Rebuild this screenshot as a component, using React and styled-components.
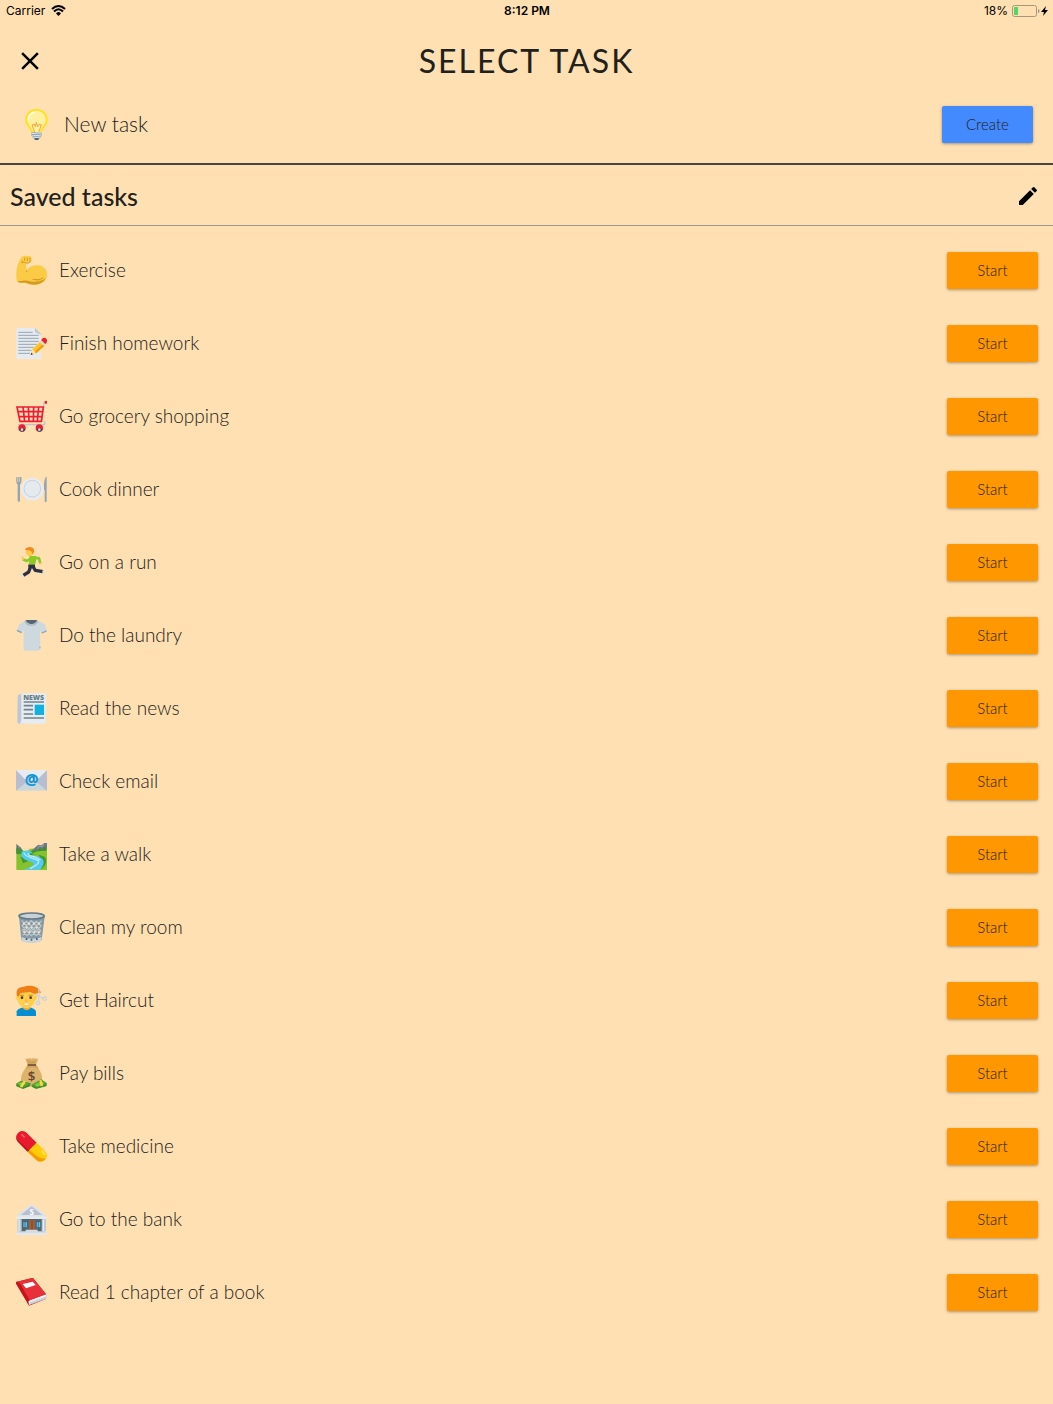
import React from "react";
import styled, { createGlobalStyle } from "styled-components";

const GlobalStyle = createGlobalStyle`
  *, *::before, *::after { box-sizing: border-box; }
  body {
    margin: 0;
    background: #ffe0b2;
    color: #22201a;
    font-family: Lato, "Open Sans", sans-serif;
    font-weight: 300;
  }
  button { font: inherit; color: inherit; border: 0; cursor: pointer; }
`;

const Screen = styled.div`
  min-height: 100vh;
  display: flex;
  flex-direction: column;
`;

const StatusBar = styled.div`
  display: grid;
  grid-template-columns: 1fr auto 1fr;
  align-items: center;
  height: 21px;
  padding: 0 5px 0 6px;
  font-family: Inter, Roboto, sans-serif;
  font-size: 12px;
  font-weight: 400;
  color: #000;
`;

const StatusGroup = styled.div`
  display: flex;
  align-items: center;
  justify-content: ${(p) => (p.$end ? "flex-end" : "flex-start")};
  gap: ${(p) => (p.$end ? 4 : 6)}px;
`;

const Clock = styled.time`
  font-weight: 600;
`;

const Header = styled.header`
  display: grid;
  grid-template-columns: 1fr auto 1fr;
  align-items: center;
  height: 80px;
  padding: 0 15px;
`;

const Title = styled.h1`
  margin: 0;
  font-size: 32px;
  line-height: 40px;
  font-weight: 400;
  letter-spacing: 2px;
`;

const IconButton = styled.button`
  display: flex;
  justify-self: start;
  padding: 0;
  background: none;
  color: #000;
`;

const NewTask = styled.section`
  display: flex;
  align-items: center;
  gap: 12px;
  height: 47px;
  margin-bottom: 15px;
  padding: 0 20px 0 21px;
`;

const SavedHeader = styled.div`
  display: flex;
  align-items: center;
  justify-content: space-between;
  height: 63px;
  padding: 1px 13px 0 10px;
  border-top: 2px solid #4a4444;
  border-bottom: 1px solid #9c9691;
`;

const SavedTitle = styled.h2`
  margin: 0;
  font-size: 25px;
  line-height: 32px;
  font-weight: 500;
`;

const TaskList = styled.ul`
  list-style: none;
  margin: 0;
  padding: 8px 0;
`;

const TaskRow = styled.li`
  display: flex;
  align-items: center;
  gap: 12px;
  height: 73px;
  padding: 0 15px 0 16px;
`;

const TaskName = styled.span`
  flex: 1;
  padding-bottom: 1px;
  font-size: ${(p) => (p.$large ? 21 : 19)}px;
  line-height: 24px;
`;

const ActionButton = styled.button`
  && {
    width: 91px;
    height: 37px;
    padding: 0 0 2px;
    border-radius: 2px;
    background: ${(p) => (p.$primary ? "#448aff" : "#ff9800")};
    box-shadow: 0 1px 3px rgba(0, 0, 0, 0.35);
    font-size: 15px;
  }
`;

const Emoji = styled.svg`
  width: 31px;
  height: 31px;
  flex: none;
  overflow: visible;
`;

const art = {
  bulb: (
    <>
      <path d="M46 0C26 0 13 14 13 33c0 18 16 23 18 40h31c2-17 18-22 18-40C80 14 67 0 46 0z" fill="#ffe11f" />
      <path d="M46 5C30 5 19 17 19 33c0 15 14 20 17 37h21c3-17 17-22 17-37C74 17 63 5 46 5z" fill="#fff0a0" />
      <path d="M22 30c1-11 8-18 17-20" fill="none" stroke="#fff" strokeWidth="4" strokeLinecap="round" />
      <path d="M41 70L33 48l6-3 4 8 3-13 4 13 5-8 6 3-8 22" fill="none" stroke="#eea63a" strokeWidth="3" />
      <path d="M31 70h31v9l-5 8-6 6h-9l-6-6-5-8z" fill="#94a5b1" />
      <path d="M31 74l31-3M32 81l29-3M36 87l21-3" stroke="#dfe7eb" strokeWidth="3" />
      <path d="M40 88h14l-3 5h-8z" fill="#455763" />
    </>
  ),
  arm: (
    <>
      <path d="M17 5c7-4 18-3 25-1 5 1 5 6 4 11-1 6-5 9-12 9l-3-1c-2 9 0 17 3 23C39 35 52 30 65 31c17 1 28 12 28 28 0 18-15 29-36 30-11 0-19-2-28-6-9 1-17 2-26-3C-1 59-1 32 17 5z" fill="#fbcb45" />
      <path d="M6 78c12 1 20-3 29-1 18 6 40 3 54-7-6 12-20 19-34 19-10 0-18-3-26-6-9 1-16 1-23-2zM53 71c12 3 24 0 31-6-7 12-22 14-37 8z" fill="#d79b22" />
      <path d="M20 17l-3 6c5 0 8-2 11 0 6 3 15 1 17-6M26 8v9M34 8v10M42 8v9M34 46l-4 5" fill="none" stroke="#d79b22" strokeWidth="3" />
    </>
  ),
  memo: (
    <>
      <path d="M1 0h56l18 18v75H1z" fill="#e6ebf0" />
      <path d="M57 0l18 18v2L57 12z" fill="#bac5cd" />
      <path d="M7 13h43M7 22h61M7 31h61M7 40h61M7 49h55M7 58h46M7 67h39M7 76h35" stroke="#94a5b0" strokeWidth="3" />
      <path d="M44 81l5-17 26-26 13 12-27 26z" fill="#ffc329" />
      <path d="M54 74l29-28 5 4-27 26z" fill="#f39a00" />
      <path d="M44 81l5-17 12 12z" fill="#ffe1ad" />
      <path d="M44 81l2-7 5 5z" fill="#333" />
      <path d="M71 42l13 12 4-4-13-12z" fill="#d8dee2" />
      <path d="M76 37c2-10 15-11 17 0 0 5-1 8-5 11z" fill="#ed1c2e" />
    </>
  ),
  cart: (
    <>
      <path d="M89 4l-5 2-7 57M6 71h77c5 0 5-9 0-9" fill="none" stroke="#b9c3cd" strokeWidth="4" />
      <path d="M3 18h79l-6 43H12z" fill="#ffe0c0" />
      <path d="M3 18h79l-6 43H12zM6 32h73M9 47h69M21 18l5 43M37 18l2 43M53 18l-1 43M68 18l-4 43" fill="none" stroke="#ed1c2e" strokeWidth="5" />
      <path d="M86 0h7v8h-7z" fill="#ed1c2e" />
      <circle cx="18" cy="81" r="11" fill="#ed1c2e" />
      <circle cx="70" cy="81" r="11" fill="#ed1c2e" />
      <path d="M9 83h19c0 12-17 12-19 0zM61 83h19c0 12-17 12-19 0z" fill="#3c4650" />
      <circle cx="18" cy="86" r="4" fill="#cdd5da" />
      <circle cx="70" cy="86" r="4" fill="#cdd5da" />
    </>
  ),
  plate: (
    <>
      <path d="M1 9c-1 12-1 18 4 23v47c0 6 7 6 7 0V32c5-5 5-12 4-23z" fill="#93a5b0" />
      <path d="M5 8v16M10 8v16" stroke="#ffe0b2" strokeWidth="2" />
      <path d="M92 7c-8 6-8 25-8 38v3h2v33c0 4 6 4 6 0z" fill="#93a5b0" />
      <circle cx="49" cy="46" r="34" fill="#e7ecf0" />
      <circle cx="49" cy="44" r="25" fill="#e5eaee" stroke="#c8d1d8" strokeWidth="3" />
    </>
  ),
  runner: (
    <>
      <path d="M53 31l16 3 4 15" fill="none" stroke="#8cc926" strokeWidth="8" strokeLinejoin="round" />
      <path d="M46 33L33 42l-13-5" fill="none" stroke="#8cc926" strokeWidth="8" strokeLinejoin="round" />
      <path d="M40 27h18l4 8-6 22H37l3-16z" fill="#8cc926" />
      <path d="M15 29l6-1 4 9-5 3zM70 48l6-2 1 5-5 3z" fill="#ffc94d" />
      <path d="M29 11c2-13 25-12 25 0 0 9-4 16-11 17-8 0-14-7-14-17z" fill="#ffc94d" />
      <path d="M27 8C31-3 53-3 54 9c0 5-1 9-4 13l-5-11z" fill="#f18a18" />
      <path d="M50 57l8 13 23 4" fill="none" stroke="#2d2f43" strokeWidth="10" strokeLinejoin="round" />
      <path d="M45 56L38 75 22 85" fill="none" stroke="#2d2f43" strokeWidth="10" strokeLinejoin="round" />
      <path d="M37 53h20v9H37z" fill="#2d2f43" />
      <path d="M13 81l5-1 6 8 1 3-12-6zM81 68l4 13-5 4-1-12z" fill="#d9e1e8" />
    </>
  ),
  shirt: (
    <>
      <path d="M27 2h38l22 10 6 23-15 5-6-8 1 56-5 4H27l-4-4V31l-7 9-14-7L10 13z" fill="#ced9df" />
      <path d="M29 0h34c-2 16-30 17-34 0z" fill="#536672" />
      <path d="M27 2c6 18 34 18 38 0" fill="none" stroke="#aab8c1" strokeWidth="4" />
      <path d="M3 31l14 7M77 39l15-6" stroke="#8ea1ad" strokeWidth="4" />
      <path d="M69 80h5v5h-5z" fill="#a8b8c1" />
    </>
  ),
  news: (
    <>
      <path d="M5 7l15-7 5 92H8l-4-5z" fill="#bdc7d4" />
      <path d="M16 1h74v85l-4 6H12l4-10z" fill="#e7ecf1" />
      <text x="53" y="20" textAnchor="middle" fontFamily="Open Sans, sans-serif" fontSize="21" fontWeight="800" fill="#647b87">NEWS</text>
      <path d="M23 27h61M23 38h28M23 50h28M23 63h28M23 75h61" stroke="#6d828e" strokeWidth="5" />
      <path d="M56 35h28v31H56z" fill="#11b2df" />
    </>
  ),
  email: (
    <>
      <path d="M0 12h93v62H0z" fill="#ccd7dc" />
      <path d="M0 12l38 31L0 74zM93 12L55 43l38 31z" fill="#b8bed2" />
      <path d="M0 12h93L59 46H33z" fill="#e8ecf1" />
      <text x="47" y="57" textAnchor="middle" fontFamily="Open Sans, sans-serif" fontSize="46" fontWeight="800" fill="#1697d3">@</text>
    </>
  ),
  park: (
    <>
      <path d="M1 29h92v64H1z" fill="#84c32e" />
      <path d="M9 28h36l-12 8H16z" fill="#ffe0b2" />
      <path d="M1 14l8 8 5 3 10 17H1zM45 37l13-12 9-8 9 2 9-7h8v28z" fill="#6b7982" />
      <path d="M66 29l5-9 7 4 6-9M6 29l4-6" fill="none" stroke="#9aa6ad" strokeWidth="3" />
      <path d="M1 32l14-1 9 6h21l16-5 32-4v14L46 48 1 45zM14 54c14-2 20 4 29 9l-22 10zM68 47l18 6c7 9 5 19-1 28l-9 10V68z" fill="#42992f" />
      <path d="M60 38l33-6v12l-28 4-18-3z" fill="#84c32e" />
      <path d="M17 38c12-7 28-2 32 3-14 4-12 8 5 9 17 1 30 9 29 21-1 9-7 15-12 21H21c13-4 31-11 32-18 0-8-35-7-37-27z" fill="#55caef" />
      <path d="M24 41c-1 14 32 16 43 24 5 9-12 17-25 24M35 43l5 7 17 4 16 9" fill="none" stroke="#b6edfb" strokeWidth="4" />
      <path d="M4 20l5 12H1zM85 20l6 15H79zM72 23l6 13H67z" fill="#43863b" />
    </>
  ),
  bin: (
    <>
      <path d="M9 13h77l-9 70c-5 11-54 11-61 0z" fill="#8498a5" />
      <path d="M17 25l14 15 15-14 15 15 16-15M17 42l14-14 15 15 15-15 16 15M18 56l13-14 15 15 15-15 14 15M19 42l13 15 14-14 15 15 13-15M20 70l12-13 14 14 15-14 13 14M20 56l13 15 13-14 15 14 13-14" stroke="#b9c6ce" strokeWidth="4" fill="none" />
      <path d="M24 30l4 5-4 5-4-5zM39 30l4 5-4 5-4-5zM54 30l4 5-4 5-4-5zM69 30l4 5-4 5-4-5zM32 42l4 5-4 5-4-5zM47 42l4 5-4 5-4-5zM62 42l4 5-4 5-4-5zM25 55l4 5-4 5-4-5zM40 55l4 5-4 5-4-5zM55 55l4 5-4 5-4-5zM69 55l4 5-4 5-4-5z" fill="#f3dfc5" />
      <path d="M16 75c17 6 44 6 61 0l-2 12c-10 8-48 8-57 0z" fill="#ccd5da" />
      <path d="M29 78h5v6h-5zM44 80h5v6h-5zM60 78h5v6h-5z" fill="#536570" />
      <ellipse cx="47" cy="12" rx="38" ry="9" fill="#c7d2d8" stroke="#657985" strokeWidth="5" />
    </>
  ),
  haircut: (
    <>
      <path d="M2 93V79c5-9 15-12 29-12s25 4 29 12v14z" fill="#058fd2" />
      <path d="M22 62h20v10c-7 5-14 4-20 0z" fill="#f4ac30" />
      <path d="M3 31c-5 0-2 16 3 16 3 14 13 22 25 22s22-8 25-22c8 0 10-17 3-16l-8-17H12z" fill="#ffcf4b" />
      <path d="M3 32C-2 15 9 5 22 6c17-8 45-5 53 17L55 27 43 21 13 24 8 35z" fill="#ef7f14" />
      <path d="M12 31h12M38 31h12" stroke="#bd6815" strokeWidth="2" />
      <circle cx="18" cy="38" r="4" fill="#4d352d" />
      <circle cx="44" cy="38" r="4" fill="#4d352d" />
      <path d="M31 41l-2 8h5" fill="none" stroke="#eda52c" strokeWidth="2" />
      <path d="M21 55h20c-2 8-17 8-20 0z" fill="#fff" stroke="#e59a24" strokeWidth="1" />
      <path d="M69 8l-1 42M55 27l27 14" stroke="#cbd3d7" strokeWidth="4" />
      <circle cx="66" cy="54" r="5" fill="none" stroke="#cbd3d7" strokeWidth="4" />
      <circle cx="86" cy="41" r="5" fill="none" stroke="#cbd3d7" strokeWidth="4" />
    </>
  ),
  money: (
    <>
      <path d="M28 2c8 1 13-4 19 0 7-4 13 1 20 0l-7 18c11 15 19 28 19 45 0 27-64 27-64 0 0-17 10-30 20-45z" fill="#dbb36c" />
      <path d="M36 20l24-1 8 14c-15-7-24-7-38 0zM31 4l14 6 18-4-7 12H37z" fill="#cfa35a" />
      <path d="M35 21h25" stroke="#71503b" strokeWidth="5" />
      <text x="47" y="69" textAnchor="middle" fontFamily="Open Sans, sans-serif" fontSize="40" fontWeight="600" fill="#654431">$</text>
      <path d="M0 77l15-9 30 8-3 9-21 8L1 85zM47 80l28-16 18 12-2 9-31 8-13-7z" fill="#4f9e30" />
      <path d="M5 77l13-5 15 5-15 6zM55 80l20-10 11 6-22 10z" fill="#86c941" />
      <path d="M23 68l7 2-12 20-8-3zM70 66l7 1 5 17-8 2z" fill="#ffd83e" />
      <path d="M2 83l18 7 22-8M49 85l13 5 29-9" stroke="#347829" strokeWidth="2" fill="none" />
    </>
  ),
  pill: (
    <>
      <path d="M7 5c9-8 19-5 26 2l29 28-27 27L7 33c-9-9-9-20 0-28z" fill="#e81b2c" />
      <path d="M62 35l25 25c9 9 7 19 0 27-8 7-18 7-27-1L35 62z" fill="#ffcd08" />
      <path d="M2 20c2 6 6 9 10 13l29 26-6 3L6 33c-3-4-5-8-4-13z" fill="#bc1422" />
      <path d="M41 57c14 12 30 29 49 25-9 12-21 12-30 4L35 62z" fill="#f69b00" />
      <ellipse cx="21" cy="14" rx="8" ry="3" fill="#f55a61" transform="rotate(40 21 14)" />
      <ellipse cx="82" cy="65" rx="9" ry="4" fill="#ffe050" transform="rotate(45 82 65)" />
    </>
  ),
  bank: (
    <>
      <path d="M9 42h76v43H9z" fill="#506875" />
      <path d="M47 0l42 32v6H4v-6z" fill="#dce3e9" />
      <path d="M47 7l32 26H14z" fill="#b8c0d0" />
      <text x="47" y="32" textAnchor="middle" fontFamily="Open Sans, sans-serif" fontSize="24" fontWeight="700" fill="#fff">S</text>
      <path d="M1 38h91v7H1z" fill="#e6ebef" />
      <path d="M4 46h13v36H4zM77 46h13v36H77z" fill="#c1cbd4" />
      <path d="M8 46h3v36H8zM81 46h3v36h-3z" fill="#eaf0f3" />
      <path d="M21 53h13v18H21zM61 53h13v18H61z" fill="#5cc9ed" stroke="#3e5360" strokeWidth="2" />
      <path d="M27 53v18M67 53v18" stroke="#3e5360" strokeWidth="2" />
      <path d="M39 52c0-5 18-5 18 0v27H39z" fill="#a65d32" />
      <path d="M48 49v29" stroke="#633b2b" strokeWidth="2" />
      <path d="M29 77h36v5h25v6H4v-6h25z" fill="#d5dde4" />
      <path d="M0 87h93v6H0z" fill="#e3e8ed" />
    </>
  ),
  book: (
    <>
      <path d="M0 15L38 5l13-2 40 50-1 13-51 20L0 20z" fill="#bf161e" />
      <path d="M37 71l55-20-1 14-52 19z" fill="#e9eff2" />
      <path d="M4 14L51 3l39 48-49 19z" fill="#e83038" />
      <path d="M1 15c4-3 9 2 12 7l28 48c-7 3-8 10-2 14z" fill="#c5121b" />
      <path d="M20 21l30-7 9 10-29 10z" fill="#fff" />
      <path d="M42 78l49-18M43 81l47-17" stroke="#aab7bf" strokeWidth="2" />
    </>
  ),
};

const tasks = [
  { icon: "arm", name: "Exercise" },
  { icon: "memo", name: "Finish homework" },
  { icon: "cart", name: "Go grocery shopping" },
  { icon: "plate", name: "Cook dinner" },
  { icon: "runner", name: "Go on a run" },
  { icon: "shirt", name: "Do the laundry" },
  { icon: "news", name: "Read the news" },
  { icon: "email", name: "Check email" },
  { icon: "park", name: "Take a walk" },
  { icon: "bin", name: "Clean my room" },
  { icon: "haircut", name: "Get Haircut" },
  { icon: "money", name: "Pay bills" },
  { icon: "pill", name: "Take medicine" },
  { icon: "bank", name: "Go to the bank" },
  { icon: "book", name: "Read 1 chapter of a book" },
];

function TaskIcon({ name }) {
  return (
    <Emoji viewBox="0 0 93 93" aria-hidden="true">
      {art[name]}
    </Emoji>
  );
}

function WifiIcon() {
  return (
    <svg width="15" height="11" viewBox="0 0 15 11" aria-hidden="true">
      <path d="M1 4c4-4 9-4 13 0M3 6.500c3-3 6-3 9 0" fill="none" stroke="#000" strokeWidth="2" />
      <path d="M5 8.500c2-2 3-2 5 0L7.500 11z" />
    </svg>
  );
}

function BatteryIcon() {
  return (
    <svg width="36" height="12" viewBox="0 0 36 12" aria-hidden="true">
      <rect x="0.500" y="0.500" width="24" height="11" rx="2" fill="none" stroke="#a8977c" />
      <path d="M26 4c2 0 2 4 0 4z" fill="#a8977c" />
      <path d="M2 2h4v8H2z" fill="#4cd964" />
      <path d="M34 1l-5 6h3l-1 4 5-6h-3z" />
    </svg>
  );
}

export default function App() {
  return (
    <Screen>
      <GlobalStyle />
      <StatusBar>
        <StatusGroup>
          <span>Carrier</span>
          <WifiIcon />
        </StatusGroup>
        <Clock>8:12 PM</Clock>
        <StatusGroup $end>
          <span>18%</span>
          <BatteryIcon />
        </StatusGroup>
      </StatusBar>
      <Header>
        <IconButton aria-label="Close">
          <svg width="30" height="30" viewBox="0 0 24 24" fill="currentColor">
            <path d="M19 6.410L17.590 5 12 10.590 6.410 5 5 6.410 10.590 12 5 17.590 6.410 19 12 13.410 17.590 19 19 17.590 13.410 12z" />
          </svg>
        </IconButton>
        <Title>SELECT TASK</Title>
      </Header>
      <main>
        <NewTask>
          <TaskIcon name="bulb" />
          <TaskName $large>New task</TaskName>
          <ActionButton $primary>Create</ActionButton>
        </NewTask>
        <SavedHeader>
          <SavedTitle>Saved tasks</SavedTitle>
          <IconButton aria-label="Edit saved tasks">
            <svg width="24" height="24" viewBox="0 0 24 24" fill="currentColor">
              <path d="M3 17.250V21h3.750L17.810 9.940l-3.750-3.750L3 17.250zM20.710 7.040a1 1 0 0 0 0-1.410l-2.340-2.340a1 1 0 0 0-1.410 0l-1.830 1.830 3.750 3.750 1.830-1.830z" />
            </svg>
          </IconButton>
        </SavedHeader>
        <TaskList>
          {tasks.map((task) => (
            <TaskRow key={task.name}>
              <TaskIcon name={task.icon} />
              <TaskName>{task.name}</TaskName>
              <ActionButton>Start</ActionButton>
            </TaskRow>
          ))}
        </TaskList>
      </main>
    </Screen>
  );
}
